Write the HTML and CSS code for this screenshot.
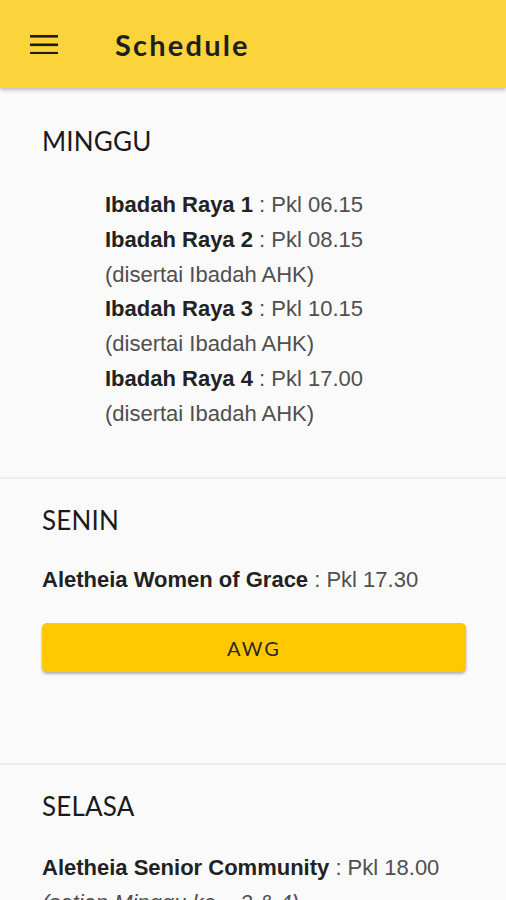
FILE: index.html
```html
<!DOCTYPE html>
<html lang="id">
<head>
    <meta charset="UTF-8">
    <meta name="viewport" content="width=device-width, initial-scale=1.0">
    <title>Schedule</title>
    <link rel="stylesheet" href="styles.css">
</head>
<body>
<header class="appbar">
    <svg class="menu-icon" width="28" height="20" viewBox="0 0 28 20">
        <rect x="0" y="1" width="28" height="2.6" fill="#1c1c1c"/>
        <rect x="0" y="9.5" width="28" height="2.6" fill="#1c1c1c"/>
        <rect x="0" y="17.9" width="28" height="2.6" fill="#1c1c1c"/>
    </svg>
    <h1 class="title">Schedule</h1>
</header>

<main class="content">
    <section class="day first">
        <h2 class="day-name">MINGGU</h2>
        <div class="list indent">
            <p><b>Ibadah Raya 1</b> : Pkl 06.15</p>
            <p><b>Ibadah Raya 2</b> : Pkl 08.15</p>
            <p>(disertai Ibadah AHK)</p>
            <p><b>Ibadah Raya 3</b> : Pkl 10.15</p>
            <p>(disertai Ibadah AHK)</p>
            <p><b>Ibadah Raya 4</b> : Pkl 17.00</p>
            <p>(disertai Ibadah AHK)</p>
        </div>
    </section>

    <section class="day senin">
        <h2 class="day-name">SENIN</h2>
        <div class="list">
            <p><b>Aletheia Women of Grace</b> : Pkl 17.30</p>
        </div>
        <button class="btn">AWG</button>
    </section>

    <section class="day selasa">
        <h2 class="day-name">SELASA</h2>
        <div class="list">
            <p><b>Aletheia Senior Community</b> : Pkl 18.00</p>
            <p class="note">(setiap Minggu ke – 2 &amp; 4)</p>
        </div>
    </section>
</main>
</body>
</html>
```

FILE: styles.css
```css
body {
    margin: 0;
    padding: 0;
    background: #fafafa;
    font-family: "Liberation Sans", Arial, sans-serif;
    height: 900px;
    overflow: hidden;
}

.appbar {
    height: 88px;
    background: #fbd43b;
    display: flex;
    align-items: center;
    padding-left: 30px;
    box-shadow: 0 2px 4px rgba(0, 0, 0, 0.25);
    position: relative;
    z-index: 1;
}

.menu-icon {
    display: block;
}

.title {
    margin: 0 0 0 57px;
    font-family: Lato, "Noto Sans", sans-serif;
    font-weight: 700;
    font-size: 29px;
    color: #1f1f1f;
    letter-spacing: 2.2px;
}

.content {
    display: flex;
    flex-direction: column;
}

.day {
    padding: 25px 40px 38px 42px;
    border-bottom: 2px solid #eeeeee;
}

.day.first {
    padding-top: 37px;
    padding-bottom: 45px;
}

.day-name {
    margin: 0 0 27px 0;
    font-family: Lato, "Noto Sans", sans-serif;
    font-weight: 400;
    font-size: 26px;
    line-height: 32px;
    color: #1a1a1a;
    letter-spacing: 0.2px;
}

.first .day-name {
    margin-bottom: 31px;
}

.selasa .day-name {
    margin-bottom: 29px;
}

.list p {
    margin: 0;
    font-size: 22px;
    line-height: 34.8px;
    color: #4f4f4f;
}

.list b {
    color: #222;
}

.indent {
    padding-left: 63px;
}

.senin {
    padding-bottom: 91px;
}

.btn {
    display: block;
    width: 100%;
    height: 49px;
    margin-top: 26px;
    border: none;
    border-radius: 5px;
    background: #ffc800;
    box-shadow: 0 2px 3px rgba(0, 0, 0, 0.3);
    font-family: Lato, "Noto Sans", sans-serif;
    font-size: 20px;
    letter-spacing: 2px;
    color: #2a2a2a;
}

.note {
    font-style: italic;
}
```
